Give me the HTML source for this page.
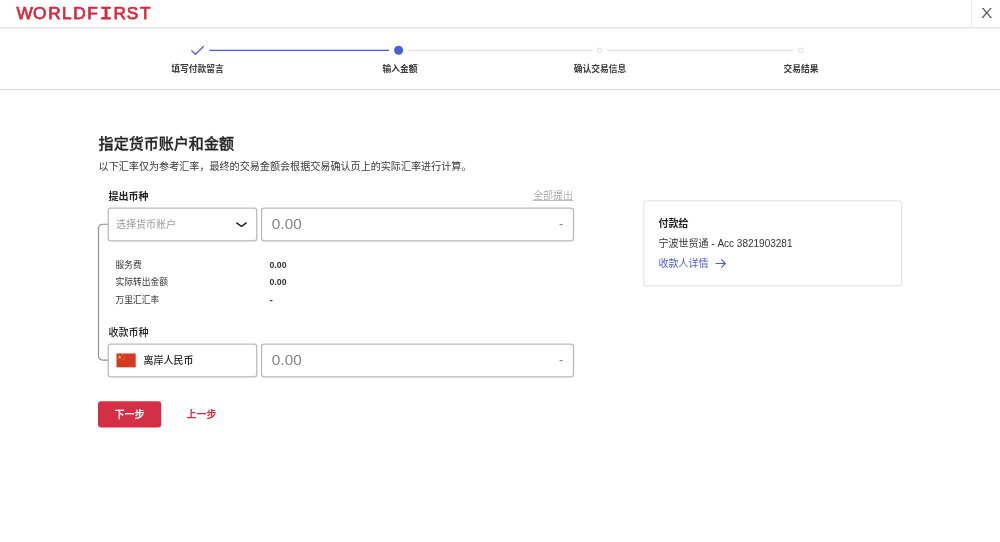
<!DOCTYPE html>
<html lang="zh-CN">
<head>
<meta charset="utf-8">
<title>WorldFirst</title>
<style>
*{box-sizing:border-box;margin:0;padding:0}
html,body{width:1000px;height:542px;overflow:hidden;background:#fff}
body{position:relative;will-change:transform;font-family:"Liberation Sans","Noto Sans CJK SC",sans-serif;color:#2b2b2b;-webkit-font-smoothing:antialiased}
.a{position:absolute;white-space:nowrap}
.hdr{left:0;top:0;width:1000px;height:29px;border-bottom:1px solid #f1f1f1;box-shadow:inset 0 -1px 0 #e7e7e7}
.vdiv{left:971px;top:0;width:1px;height:28px;background:#ededed}
.steps{left:0;top:28px;width:1000px;height:62px;border-bottom:1px solid #dcdcdc}
.sl{font-size:8.75px;line-height:12px;font-weight:700;color:#3a3a3a;transform:translateX(-50%);top:63px}
.title{left:98.6px;top:133px;font-size:15.05px;line-height:22px;font-weight:500;color:#262626;-webkit-text-stroke:0.3px #262626}
.sub{left:98.6px;top:160px;font-size:10.09px;line-height:14px;color:#3a3a3a}
.lbl{font-size:10px;line-height:14px;font-weight:700;color:#222;left:108.5px}
.ph{color:#9a9a9a}
.amt{font-size:15.4px;line-height:20px;color:#858585;left:271.8px}
.row{font-size:8.75px;line-height:12px;color:#333;left:115.5px}
.val{font-size:8.75px;line-height:12px;color:#333;font-weight:700;left:269.5px}
</style>
</head>
<body>
<!-- header -->
<div class="a hdr"></div>
<svg class="a" style="left:0;top:0" width="170" height="27" viewBox="0 0 170 27"><text y="18.9" x="16.4 33.1 48.2 62 73.3 87.2 99.6 113.4 126.7 140" font-family="'Liberation Sans',sans-serif" font-weight="400" font-size="17.3" fill="#d52b41" stroke="#d52b41" stroke-width="0.75">WORLDF<tspan font-family="'Liberation Mono',monospace" font-size="18.2" textLength="13.1" lengthAdjust="spacingAndGlyphs">I</tspan>RST</text></svg>
<div class="a vdiv"></div>
<div class="a" style="left:982.2px;top:5.4px;font-size:14.4px;line-height:17px;color:#5f5f5f;transform:scaleX(1.2)">X</div>

<!-- stepper -->
<div class="a steps"></div>
<svg class="a" style="left:0;top:40px" width="1000" height="22" viewBox="0 0 1000 22"><g fill="none" stroke-width="1.25"><path d="M191.4 10.4L195.5 14.3L203.7 6.2" stroke="#4a5fd6" stroke-width="1.3"/><path d="M209.3 10.4H389" stroke="#4a5fd6"/><path d="M408.2 10.4H592.3M607.3 10.4H793.3" stroke="#e2e2e2"/><circle cx="599.8" cy="10.3" r="2.2" stroke="#d6d6d6" stroke-width="0.9"/><circle cx="800.9" cy="10.3" r="2.2" stroke="#d6d6d6" stroke-width="0.9"/></g><circle cx="398.6" cy="10.3" r="4.5" fill="#4a5fd6"/></svg>
<div class="a sl" style="left:197.5px">填写付款留言</div>
<div class="a sl" style="left:400px">输入金额</div>
<div class="a sl" style="left:600px">确认交易信息</div>
<div class="a sl" style="left:801px">交易结果</div>

<!-- form -->
<div class="a title">指定货币账户和金额</div>
<div class="a sub">以下汇率仅为参考汇率，最终的交易金额会根据交易确认页上的实际汇率进行计算。</div>

<div class="a lbl" style="top:190px">提出币种</div>
<div class="a" style="left:533px;top:189px;font-size:10px;line-height:14px;color:#8e8e8e;font-weight:300;text-decoration:underline;text-decoration-color:#bdbdbd;text-underline-offset:1.4px;text-decoration-thickness:0.8px">全部提出</div>

<!-- connector -->
<svg class="a" style="left:96px;top:222px" width="14" height="142" viewBox="0 0 14 142"><path d="M12.5 2.2H7Q2.5 2.2 2.5 6.7V133.6Q2.5 138.1 7 138.1H12.5" stroke="#909090" stroke-width="1.15" fill="none"/></svg>

<svg class="a" style="left:0;top:200px" width="600" height="184" viewBox="0 200 600 184"><g fill="#fff" stroke="#b9b9b9" stroke-width="1.25"><rect x="108.2" y="208" width="148.55" height="32.85" rx="2.6"/><rect x="261.55" y="208" width="311.95" height="32.85" rx="2.6"/><rect x="108.2" y="344" width="148.55" height="32.85" rx="2.6"/><rect x="261.55" y="344" width="311.95" height="32.85" rx="2.6"/></g></svg>
<div class="a ph" style="left:116px;top:217.8px;font-size:10px;line-height:14px">选择货币账户</div>
<svg class="a" style="left:235px;top:221px" width="13" height="8" viewBox="0 0 13 8"><path d="M1.35 1.65L6.5 5.35L11.65 1.65" stroke="#222" stroke-width="1.5" stroke-linejoin="round" fill="none"/></svg>
<div class="a amt" style="top:214px">0.00</div>
<div class="a" style="left:559px;top:217px;font-size:13px;line-height:14px;color:#8a8a8a">-</div>

<div class="a row" style="top:259px">服务费</div>
<div class="a row" style="top:276px">实际转出金额</div>
<div class="a row" style="top:294px">万里汇汇率</div>
<div class="a val" style="top:259px">0.00</div>
<div class="a val" style="top:276px">0.00</div>
<div class="a val" style="top:294.3px;font-size:10px;color:#444">-</div>

<div class="a lbl" style="top:326px;font-weight:500">收款币种</div>
<svg class="a" style="left:110px;top:348px" width="32" height="24" viewBox="0 0 32 24"><g transform="translate(6.5,5.45) scale(0.64,0.695)"><rect width="30" height="20" fill="#d23a22"/><g fill="#f7d33a"><polygon points="5,2.6 5.7,4.5 7.7,4.6 6.1,5.8 6.7,7.7 5,6.6 3.3,7.7 3.9,5.8 2.3,4.6 4.3,4.5"/><circle cx="10" cy="2" r=".7"/><circle cx="12" cy="4" r=".7"/><circle cx="12" cy="7" r=".7"/><circle cx="10" cy="9" r=".7"/></g></g></svg>
<div class="a" style="left:143.5px;top:353.6px;font-size:10px;line-height:14px;color:#262626;font-weight:500">离岸人民币</div>
<div class="a amt" style="top:350px">0.00</div>
<div class="a" style="left:559px;top:353px;font-size:13px;line-height:14px;color:#8a8a8a">-</div>

<svg class="a" style="left:90px;top:395px" width="80" height="40" viewBox="0 0 80 40"><rect x="8" y="6.35" width="63.2" height="26.1" rx="3" fill="#d42f45"/></svg>
<div class="a" style="left:114.5px;top:408.1px;font-size:10px;line-height:14px;font-weight:700;color:#fff">下一步</div>
<div class="a" style="left:186.5px;top:408.1px;font-size:10px;line-height:14px;font-weight:700;color:#d42f45">上一步</div>

<!-- card -->
<svg class="a" style="left:636px;top:194px" width="274" height="100" viewBox="636 194 274 100"><rect x="643.85" y="200.75" width="257.8" height="85" rx="2.6" fill="#fff" stroke="#e5e5e5" stroke-width="1.25"/></svg>
<div class="a" style="left:658.5px;top:216.7px;font-size:10px;line-height:14px;font-weight:700;color:#222">付款给</div>
<div class="a" style="left:658.5px;top:237px;font-size:10px;line-height:14px;color:#333">宁波世贸通 - Acc 3821903281</div>
<div class="a" style="left:658.5px;top:257.1px;font-size:10px;line-height:14px;color:#4a5fd6">收款人详情</div>
<svg class="a" style="left:715px;top:258px" width="12" height="11" viewBox="0 0 12 11"><path d="M0.5 5.5H10.3M6.3 1.4L10.4 5.5L6.3 9.6" stroke="#4a5fd6" stroke-width="1.2" fill="none"/></svg>
</body>
</html>
